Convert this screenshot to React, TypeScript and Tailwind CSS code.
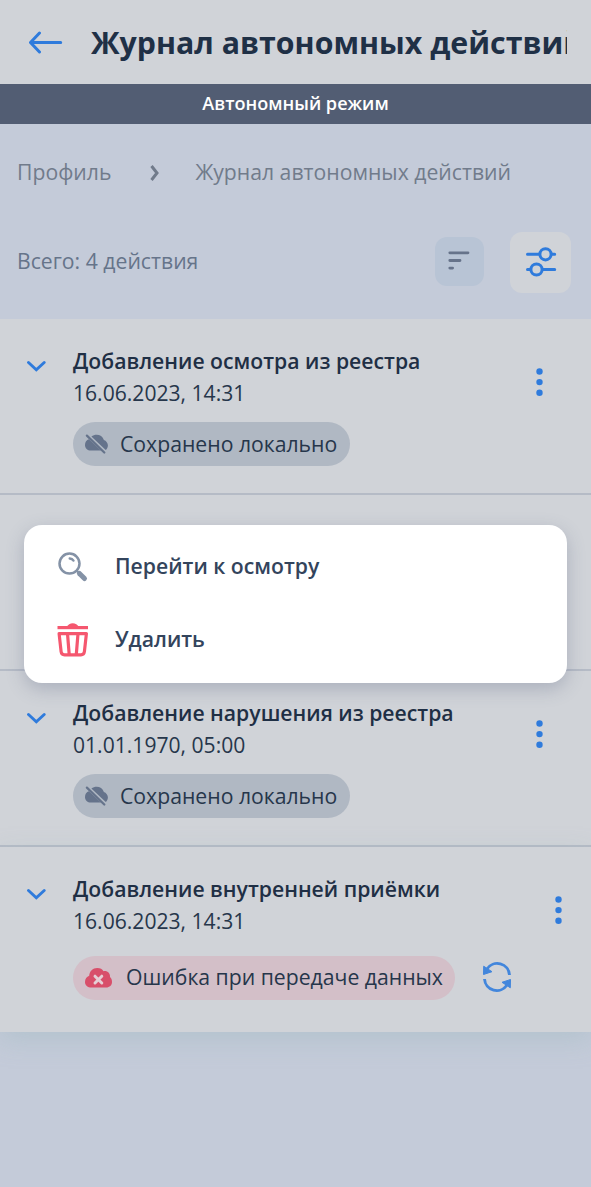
import React from "react";

type ActionRow = {
  title: string;
  date: string;
  status: "local" | "error";
};

const rows: ActionRow[] = [
  { title: "Добавление осмотра из реестра", date: "16.06.2023, 14:31", status: "local" },
  { title: "", date: "", status: "local" },
  { title: "Добавление нарушения из реестра", date: "01.01.1970, 05:00", status: "local" },
  { title: "Добавление внутренней приёмки", date: "16.06.2023, 14:31", status: "error" },
];

function BackArrow() {
  return (
    <svg width="36" height="24" viewBox="0 0 36 24" fill="none" stroke="#2f7bdc" strokeWidth="3" strokeLinecap="round" strokeLinejoin="round">
      <path d="M33.7 12.5H3.500M12.500 3 3.500 12.500 12.500 22" />
    </svg>
  );
}

function ChevronDown() {
  return (
    <svg width="20" height="13" viewBox="0 0 20 13" fill="none" stroke="#2f7bdc" strokeWidth="2.9" strokeLinecap="round" strokeLinejoin="miter">
      <path d="M2.500 2.500 10.300 9.800 18.200 2.500" />
    </svg>
  );
}

function SortIcon() {
  return (
    <svg width="24" height="22" viewBox="0 0 24 22" stroke="#66738a" strokeWidth="2.8" strokeLinecap="round">
      <path d="M1.800 1.800H20M1.800 9.500H12M1.800 17.100H4.600" />
    </svg>
  );
}

function FilterIcon() {
  return (
    <svg width="34" height="32" viewBox="0 0 34 32" fill="none" stroke="#2f7bdc" strokeWidth="3" strokeLinecap="round">
      <path d="M3.500 7.300H15M27.500 7.300H30.700M3.500 22.500H6M18.500 22.500H30.700" />
      <circle cx="21.500" cy="7.300" r="5.600" />
      <circle cx="12.500" cy="22.500" r="5.600" />
    </svg>
  );
}

function CloudOff() {
  return (
    <svg width="24" height="20" viewBox="0 0 24 20" fill="#65738b">
      <path d="M3.900 5.300C1.500 6.100 0 8.200 0 10.900 0 14.200 2.500 16.500 5.700 16.500H16Z" />
      <path d="M6.400 2.600C10.800-.8 17.300 .8 18.900 5.900 21.200 6.700 22.900 8.900 22.900 11.500 22.900 13.400 22 15 20.700 16Z" />
      <path d="M1.900 1.600 19.300 18.500" stroke="#65738b" strokeWidth="2.200" strokeLinecap="round" />
    </svg>
  );
}

function CloudError() {
  return (
    <svg width="28" height="21" viewBox="0 0 28 21">
      <path d="M6.500 19.500C2.700 19.500 0 17.200 0 13.900 0 11 1.700 8.700 4.200 7.800 4.500 3.200 7.800 0 12.200 0 15.500 0 17.100 1 18.500 3.200 22.600 2.600 25.400 5.500 25 9.100 26.300 10.200 27 12 27 14 27 17.200 24.600 19.500 21.200 19.500Z" fill="#d84f6a" />
      <path d="M10 8.200 16.800 15M16.800 8.200 10 15" stroke="#e5cfd5" strokeWidth="3" strokeLinecap="round" />
    </svg>
  );
}

function SyncIcon() {
  return (
    <svg width="30" height="30" viewBox="0 0 30 30" fill="none">
      <path d="M5 7A12.300 12.300 0 0 1 27.500 13M25 23A12.300 12.300 0 0 1 2.500 17" stroke="#4286dc" strokeWidth="2.900" />
      <path d="M1.700 4.200 1.500 12.500 10 9.700ZM28.300 25.800 28.500 17.500 20 20.300Z" fill="#4286dc" stroke="#4286dc" strokeWidth="1" strokeLinejoin="round" />
    </svg>
  );
}

function Magnifier() {
  return (
    <svg width="32" height="32" viewBox="0 0 32 32" fill="none" stroke="#8492a6" strokeLinecap="round">
      <circle cx="12.500" cy="12.600" r="10" strokeWidth="2.500" />
      <path d="M12.700 7.500C14.600 7.700 15.700 8.400 16.500 9.600" strokeWidth="2.400" />
      <path d="M20 20 23 23" strokeWidth="2.300" />
      <path d="M22.400 22.400 27.500 27.500" strokeWidth="5" />
    </svg>
  );
}

function Trash() {
  return (
    <svg width="32" height="34" viewBox="0 0 32 34" fill="none" stroke="#f5576f" strokeWidth="3.200">
      <path d="M.5 4.600H31" />
      <path d="M9.500 4.400C12.200-1.200 19.300-1.200 22 4.400Z" fill="#f5576f" stroke="none" />
      <path d="M2.100 10.600H29.400L27.400 28.600C27.100 30.800 26.200 31.800 24 31.800H7.500C5.300 31.800 4.400 30.800 4.100 28.600Z" strokeLinejoin="round" />
      <path d="M10.500 10.600 12.200 31.300M21 10.600 19.300 31.300" />
    </svg>
  );
}

function Dots() {
  return (
    <svg width="7" height="30" viewBox="0 0 7 30" fill="#2f7bdc">
      <circle cx="3.500" cy="3.500" r="3.200" />
      <circle cx="3.500" cy="14.100" r="3.200" />
      <circle cx="3.500" cy="24.700" r="3.200" />
    </svg>
  );
}

function Row({ row, last }: { row: ActionRow; last: boolean }) {
  return (
    <section
      className={
        last
          ? "flex h-[185px] bg-[#d0d3d8] pt-[25px] shadow-[0_8px_24px_rgba(150,180,185,0.35)]"
          : "flex h-[176px] border-b-2 border-[#b5bbc6] bg-[#d0d3d8] pt-[25px]"
      }
    >
      {row.title && (
        <>
          <div className="w-[73px] shrink-0 pt-[16px] pl-[26px]">
            <ChevronDown />
          </div>
          <div className="flex-1 whitespace-nowrap">
            <h2 className="text-[21.2px] leading-[34px] font-semibold text-[#1f2f45]">{row.title}</h2>
            <p className="text-[21.1px] leading-[30px] text-[#26364b]">{row.date}</p>
            {row.status === "local" ? (
              <div className="mt-[14px] flex h-[44px] w-[277px] items-center rounded-full bg-[#b0b8c3] pl-[12px]">
                <CloudOff />
                <span className="ml-[11px] text-[21.2px] leading-[42px] text-[#26364b]">Сохранено локально</span>
              </div>
            ) : (
              <div className="mt-[20px] flex items-start">
                <div className="flex h-[44px] w-[382px] items-center rounded-full bg-[#d3bfc8] pl-[12px]">
                  <CloudError />
                  <span className="ml-[13px] pb-[2px] text-[21.2px] leading-[40px] text-[#26364b]">Ошибка при передаче данных</span>
                </div>
                <div className="ml-[27px] pt-[6px]">
                  <SyncIcon />
                </div>
              </div>
            )}
          </div>
          <div className={last ? "w-[36px] shrink-0 pt-[24px]" : "w-[55px] shrink-0 pt-[24px]"}>
            <Dots />
          </div>
        </>
      )}
    </section>
  );
}

export default function App() {
  return (
    <div className="relative h-[1187px] w-[591px] overflow-hidden bg-[#c4cbd9] font-['Open_Sans','Noto_Sans',sans-serif]">
      <header className="flex h-[84px] items-center bg-[#d0d3d8] pl-[27px]">
        <BackArrow />
        <h1 className="ml-[28px] w-[476px] overflow-hidden pt-[2px] text-[30.3px] leading-[48px] font-bold whitespace-nowrap text-[#1f3046]">
          Журнал автономных действий
        </h1>
      </header>
      <div className="flex h-[40px] items-center justify-center bg-[#525d73] text-[18.1px] font-semibold text-white">
        Автономный режим
      </div>
      <nav className="flex h-[97px] items-center pb-[2px] pl-[17px] text-[21.2px] text-[#717b8b]">
        <span>Профиль</span>
        <svg className="mt-[2px] ml-[39px]" width="10" height="18" viewBox="0 0 10 18" fill="none" stroke="#717b8b" strokeWidth="3">
          <path d="M1.500 2 7 9 1.500 16" />
        </svg>
        <span className="ml-[35px]">Журнал автономных действий</span>
      </nav>
      <div className="flex h-[98px] items-start pl-[17px]">
        <span className="w-[418px] pt-[24px] text-[21.2px] leading-[32px] text-[#66748a]">Всего: 4 действия</span>
        <button className="mt-[16px] flex size-[49px] items-center justify-center rounded-[12px] bg-[#b8c4d5]">
          <SortIcon />
        </button>
        <button className="mt-[11px] ml-[26px] flex size-[61px] items-center justify-center rounded-[12px] bg-[#d0d3d8]">
          <FilterIcon />
        </button>
      </div>
      <main>
        {rows.map((row, i) => (
          <Row key={i} row={row} last={i === rows.length - 1} />
        ))}
      </main>
      <div className="absolute top-[525px] left-[24px] flex h-[158px] w-[543px] flex-col rounded-[18px] bg-white pl-[33px] text-[21.2px] font-semibold text-[#33445c] shadow-[0_6px_18px_rgba(75,85,120,0.28)]">
        <button className="flex h-[84px] items-center text-left">
          <Magnifier />
          <span className="ml-[26px] pb-[2px]">Перейти к осмотру</span>
        </button>
        <button className="flex h-[61px] items-center text-left">
          <Trash />
          <span className="ml-[26px] pb-[2px]">Удалить</span>
        </button>
      </div>
    </div>
  );
}
